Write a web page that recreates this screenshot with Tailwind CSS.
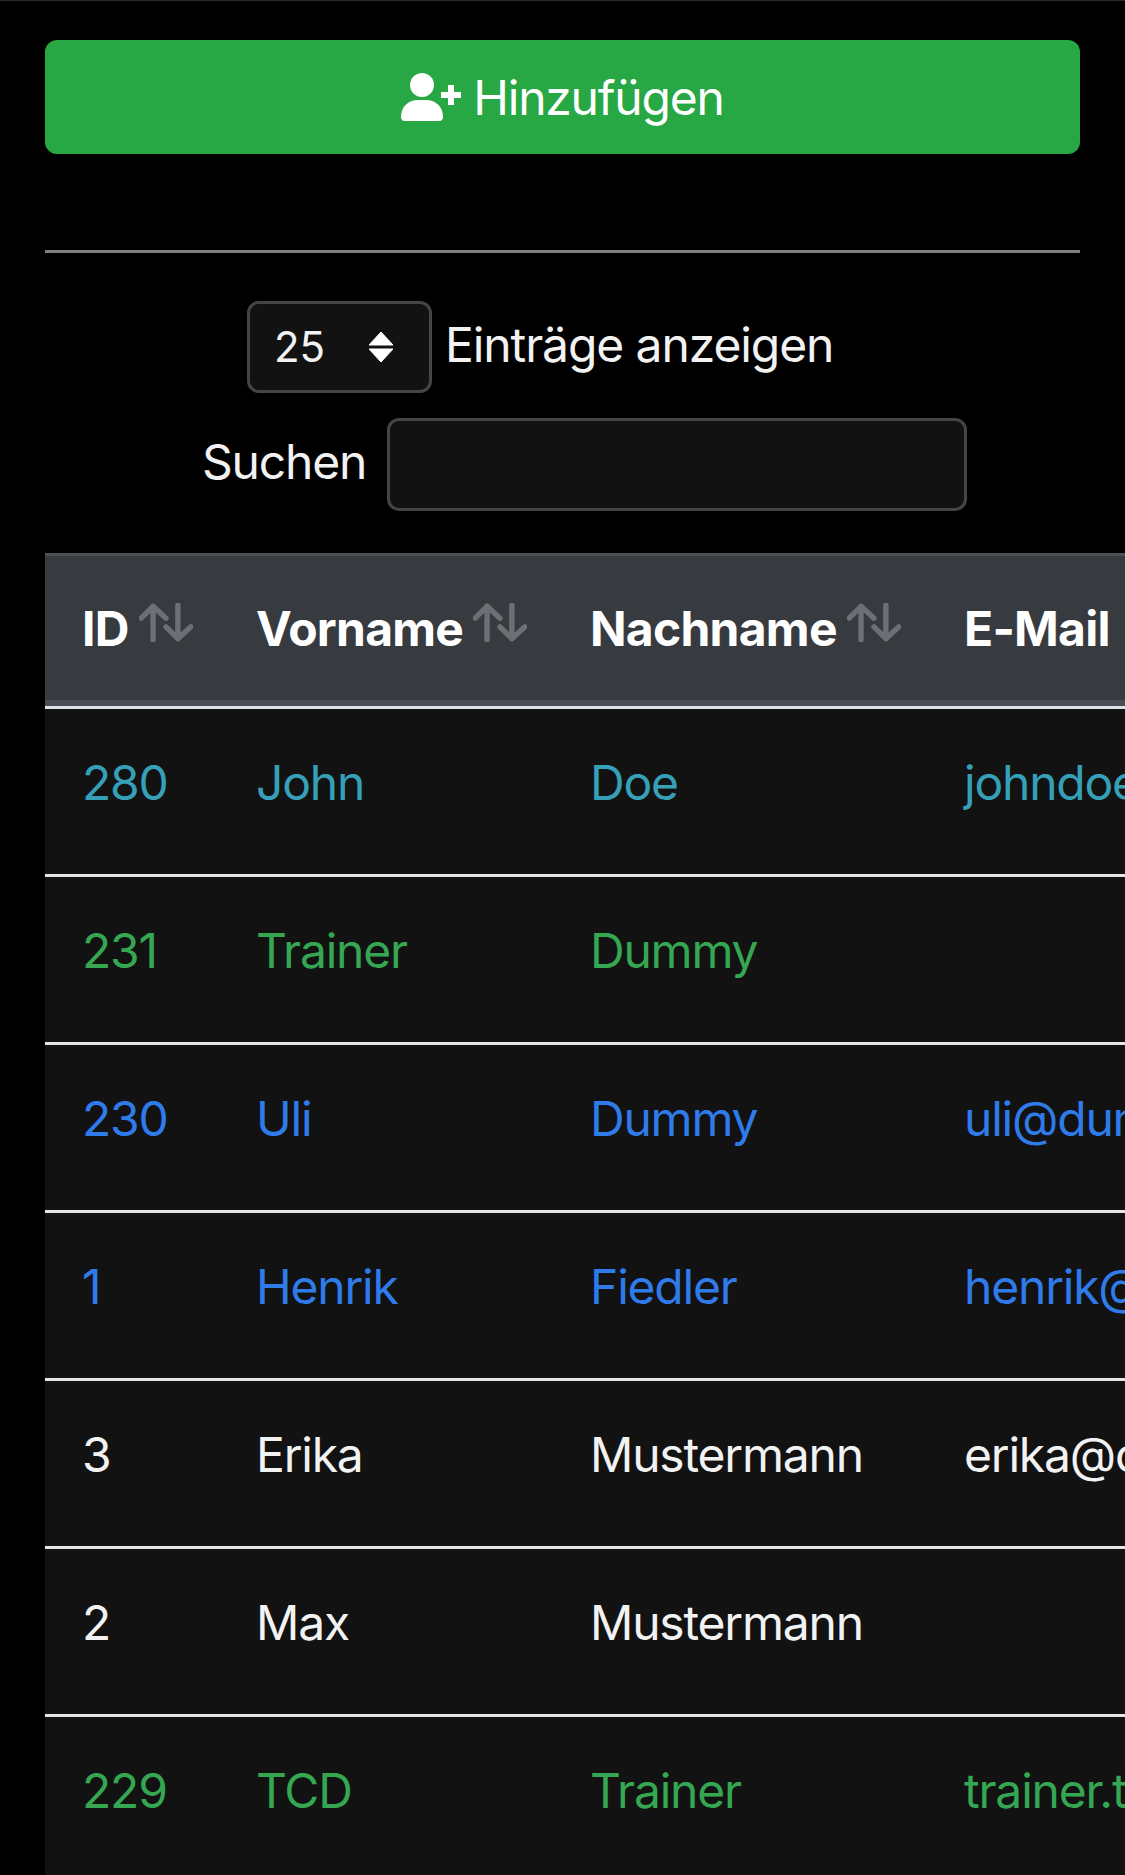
<!doctype html>
<html lang="de">
  <head>
    <meta charset="utf-8">
    <title>Benutzer</title>
    <script src="https://cdn.jsdelivr.net/npm/@tailwindcss/browser@4"></script>
  </head>

  <body class="h-[1875px] overflow-hidden bg-black font-['Inter',sans-serif] text-[#f2f2f2]">
    <div class="h-[1px] bg-[#2a2a2a]"></div>

    <div class="pl-[45px] pr-[45px] pt-[39px]">
      <a class="flex h-[114px] items-center justify-center gap-[12px] rounded-[12px] bg-[#28a745] text-[48px] tracking-[-1.2px] text-white">
        <svg class="h-[48px] w-[60px]" viewBox="0 0 60 48" fill="#fff">
          <circle cx="21" cy="12" r="12"/>
          <path d="M4 48C1 48 0 46 0 44 0 33 8 27 17 27h8c9 0 17 6 17 17 0 2-1 4-4 4z"/>
          <path d="M47 12h6v7h7v6h-7v7h-6v-7h-7v-6h7z"/>
        </svg>
        <span class="mt-[2px]">Hinzufügen</span>
      </a>
      <hr class="mt-[96px] h-[3px] border-0 bg-[#7f7f7f]">
    </div>

    <div class="mt-[48px] flex items-center pl-[247px] text-[48px] tracking-[-1.1px]">
      <div class="flex h-[92px] w-[185px] items-center justify-between rounded-[12px] border-[3px] border-[#454545] bg-[#121212] pl-[24px] pr-[36px] text-[42px] tracking-normal">
        <span class="mb-[2px]">25</span>
        <svg class="h-[30px] w-[24px]" viewBox="0 0 24 30" fill="#fff">
          <path d="M12 0l12 13H0zM12 30L0 17h24z" stroke="#fff" stroke-linejoin="round"/>
        </svg>
      </div>
      <span class="mb-[4px] ml-[13px]">Einträge anzeigen</span>
    </div>

    <div class="mt-[25px] flex items-center pl-[202px] text-[48px] tracking-[-1.2px]">
      <span class="mb-[6px]">Suchen</span>
      <div class="ml-[21px] h-[93px] w-[580px] rounded-[12px] border-[3px] border-[#454545] bg-[#121212]"></div>
    </div>

    <div class="ml-[45px] mt-[42px] w-[1300px] text-[48px] leading-[72px] tracking-[-1.2px]">
      <table class="w-full table-fixed border-separate border-spacing-0">
        <colgroup>
          <col class="w-[174px]">
          <col class="w-[334px]">
          <col class="w-[373px]">
          <col>
        </colgroup>
        <thead class="text-left font-bold tracking-[-0.75px] text-white">
          <tr>
            <th class="h-[156px] border-y-[3px] border-t-[#4b4f52] border-b-[#dee2e6] bg-[#373b3f] pl-[37px] pt-[37px] align-top shadow-[inset_0_-6px_0_#4a4e52]">
              <span class="inline-flex items-center">ID<svg class="mb-[14px] ml-[10px] h-[39px] w-[54px]" viewBox="0 0 50 36" fill="none" stroke="#6c7075" stroke-width="5" stroke-linecap="round" stroke-linejoin="round"><path d="M13 34V3M2 14L13 3l12 11M36 2v31M25 22l11 11 12-11"/></svg></span>
            </th>
            <th class="h-[156px] border-y-[3px] border-t-[#4b4f52] border-b-[#dee2e6] bg-[#373b3f] pl-[37px] pt-[37px] align-top shadow-[inset_0_-6px_0_#4a4e52]">
              <span class="inline-flex items-center">Vorname<svg class="mb-[14px] ml-[10px] h-[39px] w-[54px]" viewBox="0 0 50 36" fill="none" stroke="#6c7075" stroke-width="5" stroke-linecap="round" stroke-linejoin="round"><path d="M13 34V3M2 14L13 3l12 11M36 2v31M25 22l11 11 12-11"/></svg></span>
            </th>
            <th class="h-[156px] border-y-[3px] border-t-[#4b4f52] border-b-[#dee2e6] bg-[#373b3f] pl-[37px] pt-[37px] align-top shadow-[inset_0_-6px_0_#4a4e52]">
              <span class="inline-flex items-center">Nachname<svg class="mb-[14px] ml-[10px] h-[39px] w-[54px]" viewBox="0 0 50 36" fill="none" stroke="#6c7075" stroke-width="5" stroke-linecap="round" stroke-linejoin="round"><path d="M13 34V3M2 14L13 3l12 11M36 2v31M25 22l11 11 12-11"/></svg></span>
            </th>
            <th class="h-[156px] border-y-[3px] border-t-[#4b4f52] border-b-[#dee2e6] bg-[#373b3f] pl-[38px] pt-[37px] align-top shadow-[inset_0_-6px_0_#4a4e52]">E-Mail</th>
          </tr>
        </thead>
        <tbody class="bg-[#121212]">
          <tr class="text-[#35a0b8]">
            <td class="h-[168px] border-b-[3px] border-[#e6e6e6] pl-[37px] pt-[38px] align-top">280</td>
            <td class="h-[168px] border-b-[3px] border-[#e6e6e6] pl-[37px] pt-[38px] align-top">John</td>
            <td class="h-[168px] border-b-[3px] border-[#e6e6e6] pl-[37px] pt-[38px] align-top">Doe</td>
            <td class="h-[168px] border-b-[3px] border-[#e6e6e6] pl-[38px] pt-[38px] align-top">johndoe@example.com</td>
          </tr>
          <tr class="text-[#35a651]">
            <td class="h-[168px] border-b-[3px] border-[#e6e6e6] pl-[37px] pt-[38px] align-top">231</td>
            <td class="h-[168px] border-b-[3px] border-[#e6e6e6] pl-[37px] pt-[38px] align-top">Trainer</td>
            <td class="h-[168px] border-b-[3px] border-[#e6e6e6] pl-[37px] pt-[38px] align-top">Dummy</td>
            <td class="h-[168px] border-b-[3px] border-[#e6e6e6] pl-[38px] pt-[38px] align-top"></td>
          </tr>
          <tr class="text-[#2f7bea]">
            <td class="h-[168px] border-b-[3px] border-[#e6e6e6] pl-[37px] pt-[38px] align-top">230</td>
            <td class="h-[168px] border-b-[3px] border-[#e6e6e6] pl-[37px] pt-[38px] align-top">Uli</td>
            <td class="h-[168px] border-b-[3px] border-[#e6e6e6] pl-[37px] pt-[38px] align-top">Dummy</td>
            <td class="h-[168px] border-b-[3px] border-[#e6e6e6] pl-[38px] pt-[38px] align-top">uli@dummy.de</td>
          </tr>
          <tr class="text-[#2f7bea]">
            <td class="h-[168px] border-b-[3px] border-[#e6e6e6] pl-[37px] pt-[38px] align-top">1</td>
            <td class="h-[168px] border-b-[3px] border-[#e6e6e6] pl-[37px] pt-[38px] align-top">Henrik</td>
            <td class="h-[168px] border-b-[3px] border-[#e6e6e6] pl-[37px] pt-[38px] align-top">Fiedler</td>
            <td class="h-[168px] border-b-[3px] border-[#e6e6e6] pl-[38px] pt-[38px] align-top">henrik@example.com</td>
          </tr>
          <tr class="text-[#f2f2f2]">
            <td class="h-[168px] border-b-[3px] border-[#e6e6e6] pl-[37px] pt-[38px] align-top">3</td>
            <td class="h-[168px] border-b-[3px] border-[#e6e6e6] pl-[37px] pt-[38px] align-top">Erika</td>
            <td class="h-[168px] border-b-[3px] border-[#e6e6e6] pl-[37px] pt-[38px] align-top">Mustermann</td>
            <td class="h-[168px] border-b-[3px] border-[#e6e6e6] pl-[38px] pt-[38px] align-top">erika@demo.de</td>
          </tr>
          <tr class="text-[#f2f2f2]">
            <td class="h-[168px] border-b-[3px] border-[#e6e6e6] pl-[37px] pt-[38px] align-top">2</td>
            <td class="h-[168px] border-b-[3px] border-[#e6e6e6] pl-[37px] pt-[38px] align-top">Max</td>
            <td class="h-[168px] border-b-[3px] border-[#e6e6e6] pl-[37px] pt-[38px] align-top">Mustermann</td>
            <td class="h-[168px] border-b-[3px] border-[#e6e6e6] pl-[38px] pt-[38px] align-top"></td>
          </tr>
          <tr class="text-[#35a651]">
            <td class="h-[168px] pl-[37px] pt-[38px] align-top">229</td>
            <td class="h-[168px] pl-[37px] pt-[38px] align-top">TCD</td>
            <td class="h-[168px] pl-[37px] pt-[38px] align-top">Trainer</td>
            <td class="h-[168px] pl-[38px] pt-[38px] align-top">trainer.tcd@example.com</td>
          </tr>
        </tbody>
      </table>
    </div>
  </body>
</html>
